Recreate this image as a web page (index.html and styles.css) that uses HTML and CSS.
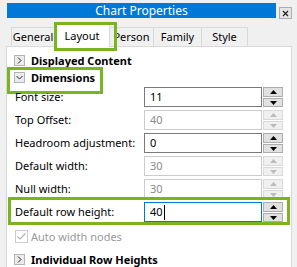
FILE: index.html
```html
<!DOCTYPE html>
<html>

<head>
    <title>Chart Properties</title>
    <link rel="stylesheet" href="styles.css">
</head>

<body>
    <div class="caption">
        <div class="caption-title">Chart Properties</div>
        <div class="caption-close">
            <svg width="7" height="7" viewBox="0 0 7 7"><path d="M1 1 L6 6 M6 1 L1 6" stroke="#222" stroke-width="1.2"/></svg>
        </div>
    </div>

    <!-- Tab strip -->
    <div class="tabs">
        <div class="tab tab-general">General</div>
        <div class="tab tab-layout active hl-tab">Layout</div>
        <div class="tab tab-person">Person</div>
        <div class="tab tab-family">Family</div>
        <div class="tab tab-style">Style</div>
    </div>

    <div class="panel">
        <div class="group">
            <span class="expander">
                <svg width="9" height="9" viewBox="0 0 9 9"><polyline points="3,1.5 6,4.5 3,7.5" fill="none" stroke="#222" stroke-width="1"/></svg>
            </span>
            Displayed Content
        </div>

        <div class="group hl-group">
            <span class="expander">
                <svg width="9" height="9" viewBox="0 0 9 9"><polyline points="1.5,3 4.5,6 7.5,3" fill="none" stroke="#222" stroke-width="1"/></svg>
            </span>
            Dimensions
        </div>

        <div class="fields">
            <div class="field">
                <label>Font size:</label>
                <div class="input">11</div>
                <div class="spin">
                    <div class="spin-btn"><svg width="7" height="4" viewBox="0 0 7 4"><polygon points="0,4 7,4 3.5,0" fill="#000"/></svg></div>
                    <div class="spin-btn"><svg width="7" height="4" viewBox="0 0 7 4"><polygon points="0,0 7,0 3.5,4" fill="#000"/></svg></div>
                </div>
            </div>
            <div class="field disabled">
                <label>Top Offset:</label>
                <div class="input">40</div>
                <div class="spin">
                    <div class="spin-btn"><svg width="7" height="4" viewBox="0 0 7 4"><polygon points="0,4 7,4 3.5,0" fill="#bcbcbc"/></svg></div>
                    <div class="spin-btn"><svg width="7" height="4" viewBox="0 0 7 4"><polygon points="0,0 7,0 3.5,4" fill="#bcbcbc"/></svg></div>
                </div>
            </div>
            <div class="field">
                <label>Headroom adjustment:</label>
                <div class="input">0</div>
                <div class="spin">
                    <div class="spin-btn"><svg width="7" height="4" viewBox="0 0 7 4"><polygon points="0,4 7,4 3.5,0" fill="#000"/></svg></div>
                    <div class="spin-btn"><svg width="7" height="4" viewBox="0 0 7 4"><polygon points="0,0 7,0 3.5,4" fill="#000"/></svg></div>
                </div>
            </div>
            <div class="field disabled">
                <label>Default width:</label>
                <div class="input">30</div>
                <div class="spin">
                    <div class="spin-btn"><svg width="7" height="4" viewBox="0 0 7 4"><polygon points="0,4 7,4 3.5,0" fill="#bcbcbc"/></svg></div>
                    <div class="spin-btn"><svg width="7" height="4" viewBox="0 0 7 4"><polygon points="0,0 7,0 3.5,4" fill="#bcbcbc"/></svg></div>
                </div>
            </div>
            <div class="field disabled">
                <label>Null width:</label>
                <div class="input">30</div>
                <div class="spin">
                    <div class="spin-btn"><svg width="7" height="4" viewBox="0 0 7 4"><polygon points="0,4 7,4 3.5,0" fill="#bcbcbc"/></svg></div>
                    <div class="spin-btn"><svg width="7" height="4" viewBox="0 0 7 4"><polygon points="0,0 7,0 3.5,4" fill="#bcbcbc"/></svg></div>
                </div>
            </div>
            <div class="field focused hl-field">
                <label>Default row height:</label>
                <div class="input">40<span class="caret"></span></div>
                <div class="spin">
                    <div class="spin-btn"><svg width="7" height="4" viewBox="0 0 7 4"><polygon points="0,4 7,4 3.5,0" fill="#000"/></svg></div>
                    <div class="spin-btn"><svg width="7" height="4" viewBox="0 0 7 4"><polygon points="0,0 7,0 3.5,4" fill="#000"/></svg></div>
                </div>
            </div>
        </div>

        <div class="check disabled">
            <span class="check-box">
                <svg width="11" height="11" viewBox="0 0 11 11"><polyline points="1.5,5.5 4,8 9.5,2.5" fill="none" stroke="#b4b4b4" stroke-width="1.2"/></svg>
            </span>
            Auto width nodes
        </div>

        <div class="group">
            <span class="expander">
                <svg width="9" height="9" viewBox="0 0 9 9"><polyline points="3,1.5 6,4.5 3,7.5" fill="none" stroke="#222" stroke-width="1"/></svg>
            </span>
            Individual Row Heights
        </div>
    </div>
</body>

</html>
```

FILE: styles.css
```css
* {
    box-sizing: border-box;
}

body {
    margin: 0;
    width: 297px;
    height: 267px;
    overflow: hidden;
    background-color: #f0f0f0;
    font-family: "Noto Sans", "Open Sans", sans-serif;
    font-size: 11px;
    color: #000;
}

/* Caption bar */
.caption {
    display: flex;
    padding: 3px 0 0 7px;
}

.caption-title {
    width: 269px;
    height: 15px;
    background-color: #0078d7;
    color: #ffffff;
    font-size: 12px;
    line-height: 15px;
    text-align: center;
}

.caption-close {
    display: flex;
    align-items: center;
    justify-content: center;
    width: 13px;
    height: 12px;
    margin: 4px 0 0 3px;
    border: 1px solid #adadad;
    background-color: #e5e5e5;
}

/* Tabs */
.tabs {
    display: flex;
    align-items: flex-end;
    height: 23px;
    margin: 5px 0 -1px 0;
    padding-left: 11px;
    position: relative;
    z-index: 1;
}

.tab {
    height: 20px;
    border: 1px solid #d9d9d9;
    margin-left: -1px;
    line-height: 18px;
    text-align: center;
    background-color: #f0f0f0;
}

.tab-general { width: 44px; margin-left: 0; }
.tab-layout { width: 56px; }
.tab-person { width: 45px; }
.tab-family { width: 49px; }
.tab-style { width: 47px; }

.tab.active {
    height: 23px;
    border-bottom: none;
    line-height: 22px;
    background-color: #ffffff;
    position: relative;
    z-index: 2;
}

/* Panel */
.panel {
    width: 286px;
    height: 222px;
    margin-left: 6px;
    padding-top: 5px;
    border: 1px solid #d9d9d9;
    border-bottom: none;
    background-color: #ffffff;
}

.group {
    display: flex;
    align-items: center;
    height: 17px;
    padding-left: 7px;
    font-weight: bold;
    position: relative;
}

.expander {
    display: flex;
    align-items: center;
    justify-content: center;
    width: 11px;
    height: 11px;
    margin-right: 6px;
    border: 1px solid #b4b4b4;
    background-color: #ececec;
}

.fields {
    display: flex;
    flex-direction: column;
    gap: 3px;
    margin-top: 1px;
}

.field {
    display: grid;
    grid-template-columns: 128px 118px 20px;
    column-gap: 1px;
    height: 20px;
    padding-left: 8px;
    position: relative;
}

.field label {
    line-height: 20px;
    white-space: nowrap;
}

.input {
    height: 20px;
    padding: 0 5px;
    border: 1px solid #7a7a7a;
    line-height: 18px;
    display: flex;
    align-items: center;
}

.spin {
    display: flex;
    flex-direction: column;
    gap: 1px;
    height: 20px;
}

.spin-btn {
    display: flex;
    align-items: center;
    justify-content: center;
    height: 10px;
    border: 1px solid #adadad;
    background-color: #e1e1e1;
}

.spin-btn + .spin-btn {
    height: 9px;
}

.field.disabled .input {
    border-color: #cccccc;
    color: #8a8a8a;
}

.field.disabled .spin-btn {
    border-color: #d9d9d9;
    background-color: #f0f0f0;
}

.field.focused .input {
    border-color: #0078d7;
}

.caret {
    display: inline-block;
    width: 1px;
    height: 15px;
    margin-left: 1px;
    background-color: #000;
}

/* Checkbox */
.check {
    display: flex;
    align-items: center;
    height: 13px;
    margin: 8px 0 8px 8px;
    color: #999999;
}

.check-box {
    display: flex;
    align-items: center;
    justify-content: center;
    width: 13px;
    height: 13px;
    margin-right: 3px;
    border: 1px solid #cccccc;
}

/* Green call-out frames */
.hl-tab::after,
.hl-group::after,
.hl-field::after {
    content: "";
    position: absolute;
    border: 3px solid #7ab51d;
    pointer-events: none;
}

.hl-tab::after {
    left: -1px;
    top: -3px;
    width: 57px;
    height: 23px;
}

.hl-group::after {
    left: 0;
    top: -2px;
    width: 90px;
    height: 21px;
}

.hl-field::after {
    left: 1px;
    right: 1px;
    top: -5px;
    bottom: -3px;
}
```
